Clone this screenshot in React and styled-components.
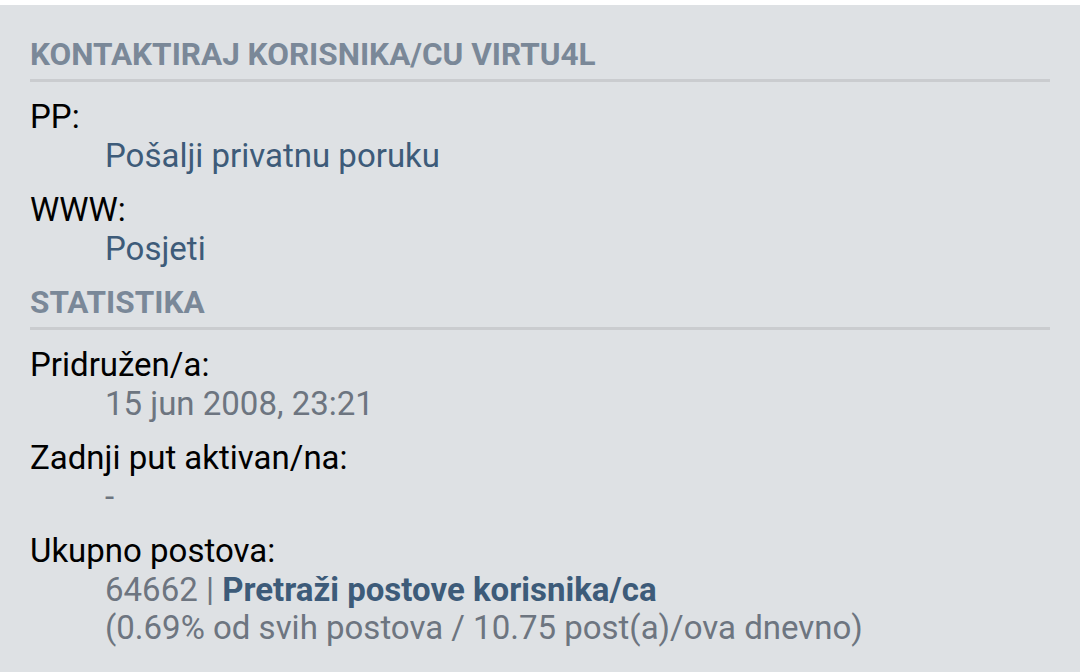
import React from 'react';
import styled, { createGlobalStyle } from 'styled-components';

const GlobalStyle = createGlobalStyle`
  html, body {
    margin: 0;
    padding: 0;
    background: #ffffff;
  }
  body {
    font-family: Roboto, "Liberation Sans", sans-serif;
  }
`

const Panel = styled.div`
  margin-top: 5px;
  background-color: #dee1e4;
  padding: 31px 30px 30px 30px;
  min-height: 667px;
  box-sizing: border-box;
`

const Heading = styled.h3`
  margin: 0 0 16px 0;
  padding-bottom: 5px;
  font-size: 31.5px;
  font-weight: 700;
  line-height: 38px;
  text-transform: uppercase;
  color: #7a8898;
  border-bottom: 3px solid #cacccf;
`

const List = styled.dl`
  margin: 0 0 1px 0;
`

const Term = styled.dt`
  font-size: 33px;
  line-height: 38.5px;
  color: #000;
  margin: 0;
`

const Detail = styled.dd`
  margin: 0 0 16px 75px;
  font-size: 33px;
  line-height: 38.5px;
  color: #6d7580;
`

const Link = styled.a`
  color: #3d5b79;
  text-decoration: none;
  font-weight: ${props => props.bold ? 700 : 400};
`

const Row = ({ label, children }) => (
  <>
    <Term>{label}</Term>
    <Detail>{children}</Detail>
  </>
)

class App extends React.Component {
  render () {
    return (
      <>
        <GlobalStyle />
        <Panel>
          <Heading>Kontaktiraj korisnika/cu virtu4l</Heading>
          <List>
            <Row label="PP:"><Link href="#">Pošalji privatnu poruku</Link></Row>
            <Row label="WWW:"><Link href="#">Posjeti</Link></Row>
          </List>
          <Heading>Statistika</Heading>
          <List>
            <Row label="Pridružen/a:">15 jun 2008, 23:21</Row>
            <Row label="Zadnji put aktivan/na:">-</Row>
            <Row label="Ukupno postova:">
              64662 | <Link href="#" bold>Pretraži postove korisnika/ca</Link>
              <br />
              (0.69% od svih postova / 10.75 post(a)/ova dnevno)
            </Row>
          </List>
        </Panel>
      </>
    )
  }
}

export default App;
